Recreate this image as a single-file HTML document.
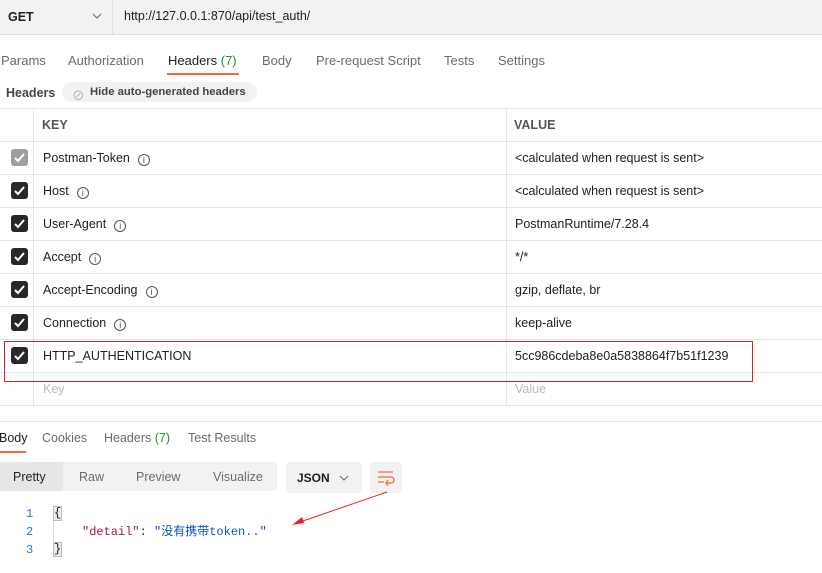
<!DOCTYPE html>
<html><head><meta charset="utf-8"><style>
*{margin:0;padding:0;box-sizing:border-box}
body{width:822px;height:573px;background:#fff;font-family:"Liberation Sans","Noto Sans CJK SC",sans-serif;font-size:12.5px;color:#212121;position:relative;overflow:hidden}
.a{position:absolute;white-space:nowrap}
.g{color:#6b6b6b}
.hl{position:absolute;left:0;width:822px;height:1px;background:#e6e6e6}
.cb{position:absolute;left:11px;width:17px;height:17px;border-radius:3px;background:#282828}
.cb svg{position:absolute;left:2px;top:2px}
.info{display:inline-block;width:12px;height:12px;border:1px solid #555;border-radius:50%;font-size:9px;text-align:center;line-height:10px;margin-left:8px;vertical-align:-1px;color:#555}
</style></head><body>
<div class="a" style="left:0;top:0;width:822px;height:35px;background:#f2f2f2;border-bottom:1px solid #e0e0e0"></div>
<div class="a" style="left:112px;top:0;width:1px;height:35px;background:#e0e0e0"></div>
<div class="a" style="left:8px;top:10px;font-weight:bold;font-size:12.5px">GET</div>
<svg class="a" style="left:92px;top:12px" width="10" height="8"><path d="M1 2l4 4 4-4" stroke="#666" fill="none"/></svg>
<div class="a" style="left:124px;top:9px;font-size:12.5px">http://127.0.0.1:870/api/test_auth/</div>

<div class="a g" style="left:1px;top:53px;font-size:13px">Params</div>
<div class="a g" style="left:68px;top:53px;font-size:13px">Authorization</div>
<div class="a" style="left:168px;top:53px;font-size:13px">Headers <span style="color:#2b8a3e">(7)</span></div>
<div class="a" style="left:167px;top:73px;width:72px;height:2px;background:#f26b3a"></div>
<div class="a g" style="left:262px;top:53px;font-size:13px">Body</div>
<div class="a g" style="left:316px;top:53px;font-size:13px">Pre-request Script</div>
<div class="a g" style="left:444px;top:53px;font-size:13px">Tests</div>
<div class="a g" style="left:498px;top:53px;font-size:13px">Settings</div>

<div class="a" style="left:6px;top:86px;font-weight:bold;color:#444">Headers</div>
<div class="a" style="left:62px;top:82px;width:195px;height:20px;border-radius:10px;background:#f2f2f2"></div>
<div class="a" style="left:72px;top:85px;color:#aaa">⊘</div>
<div class="a" style="left:90px;top:86px;font-weight:bold;color:#444;font-size:11.3px">Hide auto-generated headers</div>

<div class="hl" style="top:108px"></div>
<div class="a" style="left:33px;top:108px;width:1px;height:297px;background:#e6e6e6"></div>
<div class="a" style="left:506px;top:108px;width:1px;height:297px;background:#e6e6e6"></div>
<div class="a" style="left:42px;top:118px;font-weight:bold;color:#555">KEY</div>
<div class="a" style="left:514px;top:118px;font-weight:bold;color:#555">VALUE</div>
<div class="hl" style="top:141px"></div><div class="hl" style="top:174px"></div><div class="hl" style="top:207px"></div><div class="hl" style="top:240px"></div><div class="hl" style="top:273px"></div><div class="hl" style="top:306px"></div><div class="hl" style="top:339px"></div><div class="hl" style="top:372px"></div><div class="hl" style="top:405px"></div>

<div class="cb" style="top:149px;background:#9e9e9e"><svg width="13" height="13"><path d="M2 7l3 3 6-7" stroke="#fff" stroke-width="2" fill="none"/></svg></div>
<div class="cb" style="top:182px"><svg width="13" height="13"><path d="M2 7l3 3 6-7" stroke="#fff" stroke-width="2" fill="none"/></svg></div>
<div class="cb" style="top:215px"><svg width="13" height="13"><path d="M2 7l3 3 6-7" stroke="#fff" stroke-width="2" fill="none"/></svg></div>
<div class="cb" style="top:248px"><svg width="13" height="13"><path d="M2 7l3 3 6-7" stroke="#fff" stroke-width="2" fill="none"/></svg></div>
<div class="cb" style="top:281px"><svg width="13" height="13"><path d="M2 7l3 3 6-7" stroke="#fff" stroke-width="2" fill="none"/></svg></div>
<div class="cb" style="top:314px"><svg width="13" height="13"><path d="M2 7l3 3 6-7" stroke="#fff" stroke-width="2" fill="none"/></svg></div>
<div class="cb" style="top:347px"><svg width="13" height="13"><path d="M2 7l3 3 6-7" stroke="#fff" stroke-width="2" fill="none"/></svg></div>

<div class="a" style="left:43px;top:151px">Postman-Token<span class="info">i</span></div>
<div class="a" style="left:43px;top:184px">Host<span class="info">i</span></div>
<div class="a" style="left:43px;top:217px">User-Agent<span class="info">i</span></div>
<div class="a" style="left:43px;top:250px">Accept<span class="info">i</span></div>
<div class="a" style="left:43px;top:283px">Accept-Encoding<span class="info">i</span></div>
<div class="a" style="left:43px;top:316px">Connection<span class="info">i</span></div>
<div class="a" style="left:43px;top:349px">HTTP_AUTHENTICATION</div>
<div class="a" style="left:43px;top:382px;color:#bbb">Key</div>
<div class="a" style="left:515px;top:151px">&lt;calculated when request is sent&gt;</div>
<div class="a" style="left:515px;top:184px">&lt;calculated when request is sent&gt;</div>
<div class="a" style="left:515px;top:217px">PostmanRuntime/7.28.4</div>
<div class="a" style="left:515px;top:250px">*/*</div>
<div class="a" style="left:515px;top:283px">gzip, deflate, br</div>
<div class="a" style="left:515px;top:316px">keep-alive</div>
<div class="a" style="left:515px;top:349px">5cc986cdeba8e0a5838864f7b51f1239</div>
<div class="a" style="left:515px;top:382px;color:#bbb">Value</div>
<div class="a" style="left:4px;top:341px;width:749px;height:41px;border:1px solid #d22"></div>

<div class="hl" style="top:421px"></div>
<div class="a" style="left:-1px;top:431px">Body</div>
<div class="a" style="left:0;top:451px;width:26px;height:2px;background:#f26b3a"></div>
<div class="a g" style="left:42px;top:431px">Cookies</div>
<div class="a g" style="left:104px;top:431px">Headers <span style="color:#2b8a3e">(7)</span></div>
<div class="a g" style="left:188px;top:431px">Test Results</div>

<div class="a" style="left:0;top:462px;width:277px;height:29px;background:#f2f2f2;border-radius:3px"></div>
<div class="a" style="left:0;top:462px;width:63px;height:29px;background:#e6e6e6"></div>
<div class="a" style="left:13px;top:470px">Pretty</div>
<div class="a g" style="left:79px;top:470px">Raw</div>
<div class="a g" style="left:136px;top:470px">Preview</div>
<div class="a g" style="left:213px;top:470px">Visualize</div>
<div class="a" style="left:286px;top:462px;width:76px;height:31px;background:#f2f2f2;border-radius:3px"></div>
<div class="a" style="left:297px;top:471px;font-weight:bold;font-size:12px">JSON</div>
<svg class="a" style="left:339px;top:474px" width="10" height="8"><path d="M1 2l4 4 4-4" stroke="#666" fill="none"/></svg>
<div class="a" style="left:370px;top:462px;width:32px;height:31px;background:#f2f2f2;border-radius:3px"></div>
<svg class="a" style="left:377px;top:470px" width="18" height="16"><path d="M1 2h15M1 7h13a3 3 0 010 6h-4M1 12h6M11 10l-2 3 2 3" stroke="#f26b3a" stroke-width="1.3" fill="none"/></svg>

<svg class="a" style="left:0;top:0" width="822" height="573"><path d="M387 492L300 522" stroke="#e22" stroke-width="1"/><path d="M292 525l10-8 2 6z" fill="#e22"/></svg>

<div class="a" style="left:53px;top:506px;width:1px;height:50px;background:#ddd"></div>
<div class="a" style="font-family:'Liberation Mono','Noto Sans CJK SC',monospace;font-size:12px;left:26px;top:507px;color:#2a7ab8">1</div>
<div class="a" style="font-family:'Liberation Mono','Noto Sans CJK SC',monospace;font-size:12px;left:26px;top:525px;color:#2a7ab8">2</div>
<div class="a" style="font-family:'Liberation Mono','Noto Sans CJK SC',monospace;font-size:12px;left:26px;top:543px;color:#2a7ab8">3</div>
<div class="a" style="font-family:'Liberation Mono',monospace;font-size:12px;left:53px;top:506px;background:#e8eee8;border:1px solid #bbb;line-height:13px">{</div>
<div class="a" style="font-family:'Liberation Mono',monospace;font-size:12px;left:53px;top:542px;background:#e8eee8;border:1px solid #bbb;line-height:13px">}</div>
<div class="a" style="font-family:'Liberation Mono','Noto Sans CJK SC',monospace;font-size:12px;left:82px;top:522px"><span style="color:#a31548">"detail"</span>: <span style="color:#0b51c1">"没有携带token.."</span></div>
</body></html>
